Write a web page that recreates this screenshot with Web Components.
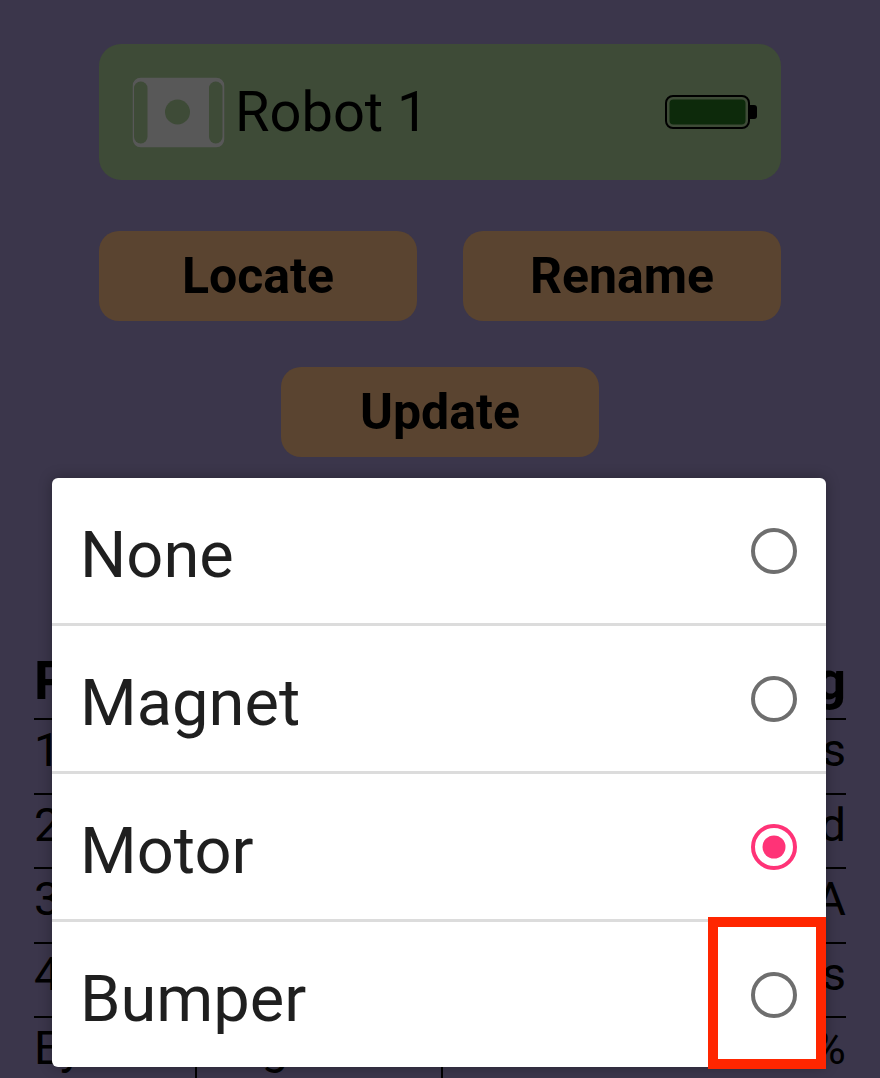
<!DOCTYPE html>
<html>
<head>
<meta charset="utf-8">
<style>
  html, body { margin: 0; height: 100%; }
  body { background: #3b364b; overflow: hidden; font-family: Roboto, sans-serif; }
</style>
</head>
<body>
<robot-screen>
  <robot-card name="Robot 1"></robot-card>
  <action-buttons></action-buttons>
  <ports-table></ports-table>
  <radio-dialog>
    <radio-row label="None"></radio-row>
    <radio-row label="Magnet"></radio-row>
    <radio-row label="Motor" checked></radio-row>
    <radio-row label="Bumper"></radio-row>
  </radio-dialog>
  <tap-marker></tap-marker>
</robot-screen>

<script>
class RobotScreen extends HTMLElement {
  constructor() {
    super();
    this.attachShadow({ mode: 'open' });
    this.shadowRoot.innerHTML = `
      <style>
        :host {
          display: block;
          position: relative;
          width: 880px;
          height: 1078px;
          overflow: hidden;
          padding-top: 44px;
          box-sizing: border-box;
        }
      </style>
      <slot></slot>
    `;
  }
}

class RobotCard extends HTMLElement {
  constructor() {
    super();
    this.attachShadow({ mode: 'open' });
  }

  connectedCallback() {
    const name = this.getAttribute('name') || '';
    this.shadowRoot.innerHTML = `
      <style>
        :host {
          display: flex;
          align-items: center;
          box-sizing: border-box;
          width: 682px;
          height: 136px;
          margin: 0 auto 0 99px;
          padding: 0 24px 0 33px;
          gap: 11px;
          background: #3e4b37;
          border-radius: 22px;
        }
        .name { flex: 1; font-size: 56px; line-height: 1; color: #000; position: relative; left: -1px; }
        svg { display: block; flex: none; }
      </style>
      <svg width="93" height="71" viewBox="0 0 93 71">
        <rect x="1.5" y="1.5" width="90" height="68" rx="7" fill="#585858" stroke="#585858" stroke-width="1.5"/>
        <rect x="2" y="4.5" width="13.5" height="62" rx="6.7" fill="#3e4b37"/>
        <rect x="77" y="4.5" width="13.5" height="62" rx="6.7" fill="#3e4b37"/>
        <circle cx="45.5" cy="35" r="12.5" fill="#3e4b37"/>
      </svg>
      <span class="name">${name}</span>
      <svg width="92" height="35" viewBox="0 0 92 35">
        <rect x="1" y="1" width="83" height="32" rx="7" fill="none" stroke="#000" stroke-width="2"/>
        <rect x="4.5" y="4.5" width="76" height="25" rx="4" fill="#0d2a0b"/>
        <path d="M85 10h4a3 3 0 0 1 3 3v8a3 3 0 0 1-3 3h-4z" fill="#000"/>
      </svg>
    `;
  }
}

class ActionButtons extends HTMLElement {
  constructor() {
    super();
    this.attachShadow({ mode: 'open' });
    this.shadowRoot.innerHTML = `
      <style>
        :host {
          display: grid;
          grid-template-columns: 318px 318px;
          justify-content: center;
          column-gap: 46px;
          row-gap: 46px;
          margin-top: 51px;
        }
        .btn {
          height: 90px;
          display: flex;
          align-items: center;
          justify-content: center;
          background: #5a4430;
          border-radius: 20px;
          font-size: 50px;
          font-weight: 700;
          color: #000;
          box-sizing: border-box;
        }
        .wide { grid-column: 1 / -1; justify-self: center; width: 318px; }
      </style>
      <div class="btn">Locate</div>
      <div class="btn">Rename</div>
      <div class="btn wide">Update</div>
    `;
  }
}

class PortsTable extends HTMLElement {
  constructor() {
    super();
    this.attachShadow({ mode: 'open' });
  }

  connectedCallback() {
    const rows = [
      ['1', '', 's'],
      ['2', '', 'd'],
      ['3', '', 'A'],
      ['4', '', 's'],
      ['Eyes', 'Brightness', '100%']
    ];
    const cells = rows.map(r => `
      <div class="row">
        <div class="cell">${r[0]}</div>
        <div class="cell">${r[1]}</div>
        <div class="cell end">${r[2]}</div>
      </div>`).join('');
    this.shadowRoot.innerHTML = `
      <style>
        :host {
          display: block;
          width: 812px;
          margin: 187px 0 0 34px;
          font-size: 47px;
          color: #000;
        }
        .row {
          display: grid;
          grid-template-columns: 162px 246px 404px;
          height: 74.5px;
          box-sizing: border-box;
          border-top: 2px solid #000;
        }
        .cell { line-height: 60px; white-space: nowrap; }
        .cell + .cell { margin-left: -1px; border-left: 2px solid #000; padding-left: 8px; }
        .end { text-align: right; }
        .head { height: 74px; border-top: 0; font-weight: 700; font-size: 54px; }
        .head .cell, .head .cell + .cell { border: 0; line-height: 74px; }
      </style>
      <div class="row head">
        <div class="cell">Port</div>
        <div class="cell"></div>
        <div class="cell end">Setting</div>
      </div>
      ${cells}
    `;
  }
}

class RadioDialog extends HTMLElement {
  constructor() {
    super();
    this.attachShadow({ mode: 'open' });
    this.shadowRoot.innerHTML = `
      <style>
        :host {
          display: flex;
          flex-direction: column;
          position: absolute;
          left: 52px;
          top: 478px;
          width: 774px;
          height: 589px;
          background: #fff;
          border-radius: 6px;
          overflow: hidden;
          box-shadow: 0 0 14px rgba(0, 0, 0, 0.3);
        }
      </style>
      <slot></slot>
    `;
  }
}

class RadioRow extends HTMLElement {
  constructor() {
    super();
    this.attachShadow({ mode: 'open' });
  }

  connectedCallback() {
    const label = this.getAttribute('label') || '';
    const checked = this.hasAttribute('checked');
    const color = checked ? '#ff3377' : '#6e6e6e';
    this.shadowRoot.innerHTML = `
      <style>
        :host {
          display: flex;
          align-items: center;
          justify-content: space-between;
          box-sizing: border-box;
          height: 148px;
          padding: 0 29px 0 28px;
          border-bottom: 3px solid #dcdcdc;
          flex: none;
        }
        :host(:last-child) { border-bottom: 0; height: 145px; }
        .label { font-size: 65px; line-height: 1; color: #1f1f1f; position: relative; top: 5px; }
        svg { display: block; }
      </style>
      <span class="label">${label}</span>
      <svg width="46" height="46" viewBox="0 0 46 46">
        <circle cx="23" cy="23" r="21" fill="none" stroke="${color}" stroke-width="4"/>
        ${checked ? `<circle cx="23" cy="23" r="11.5" fill="${color}"/>` : ''}
      </svg>
    `;
  }
}

class TapMarker extends HTMLElement {
  constructor() {
    super();
    this.attachShadow({ mode: 'open' });
    this.shadowRoot.innerHTML = `
      <style>
        :host {
          display: block;
          position: absolute;
          left: 708px;
          top: 917px;
          width: 118px;
          height: 152px;
          box-sizing: border-box;
          border: 10px solid #ff2600;
        }
      </style>
    `;
  }
}

customElements.define('robot-screen', RobotScreen);
customElements.define('robot-card', RobotCard);
customElements.define('action-buttons', ActionButtons);
customElements.define('ports-table', PortsTable);
customElements.define('radio-dialog', RadioDialog);
customElements.define('radio-row', RadioRow);
customElements.define('tap-marker', TapMarker);
</script>
</body>
</html>
